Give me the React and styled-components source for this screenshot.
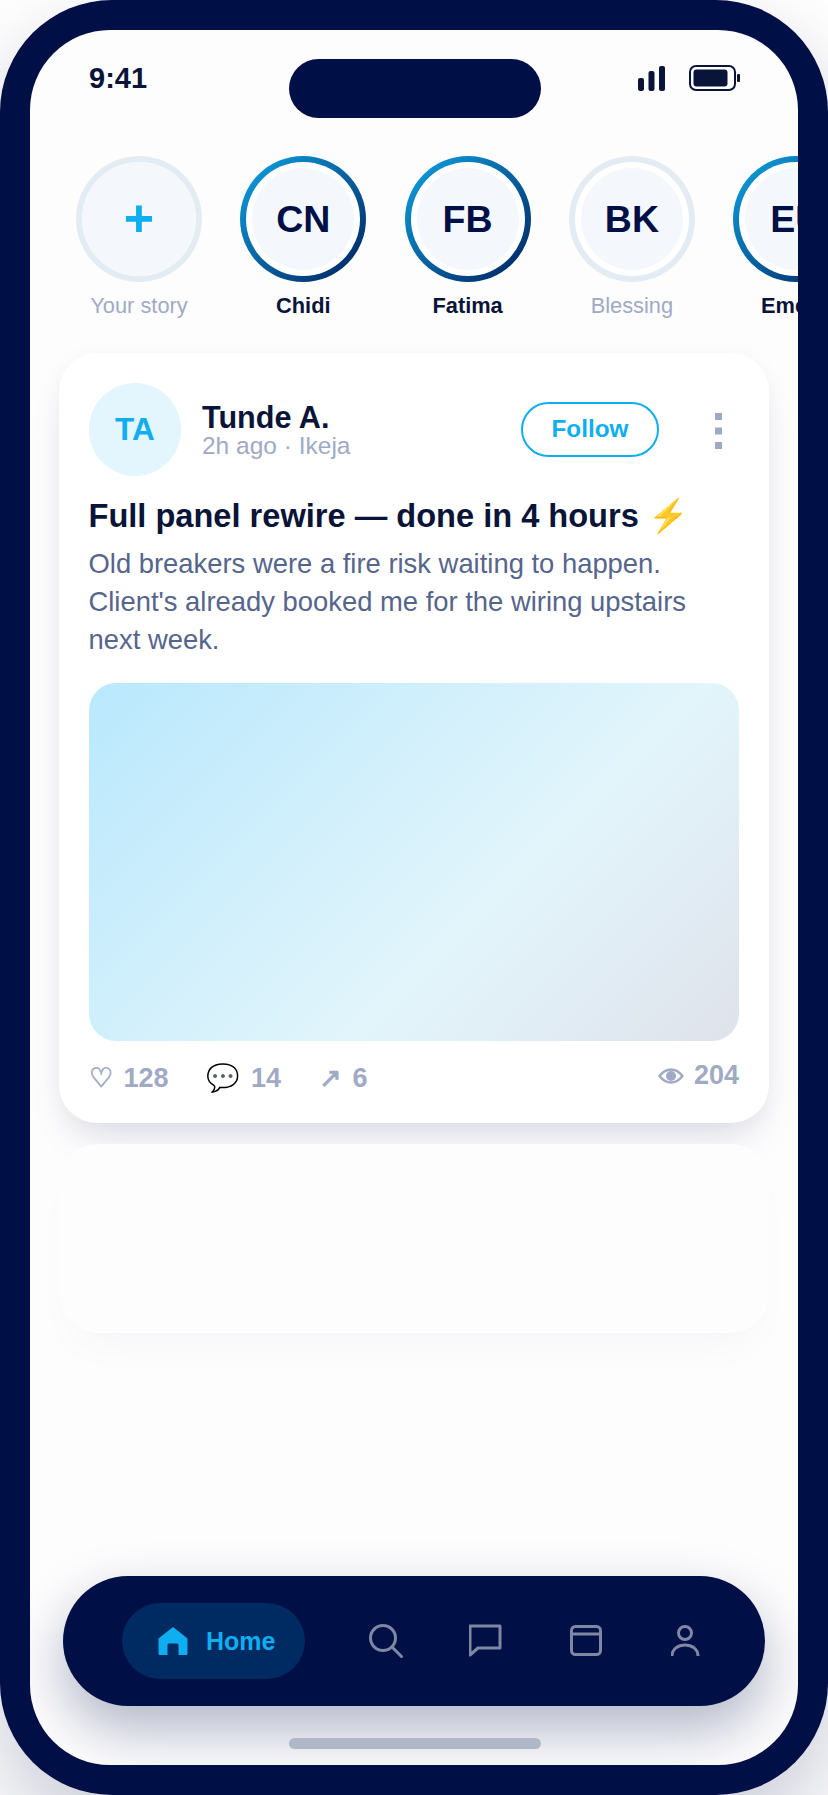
import React from "react";
import styled, { createGlobalStyle } from "styled-components";

const Global = createGlobalStyle`
  html, body { margin: 0; padding: 0; background: #fff; }
  * { box-sizing: border-box; }
  body { font-family: "Liberation Sans", Arial, sans-serif; }
`;
const Page = styled.div`width: 828px; height: 1795px; overflow: hidden; background: #fff;`;
const Phone = styled.div`
  position: relative; width: 828px; height: 1795px; padding: 30px; background: #000f45;
  border-radius: 112px; box-shadow: 0 40px 90px rgba(0, 15, 69, 0.22);
`;
const Screen = styled.div`
  position: relative; height: 1735px; border-radius: 80px; overflow: hidden; background: #fdfdfe;
`;
const Notch = styled.div`
  position: absolute; top: 29px; left: 259px; width: 252px; height: 59px;
  border-radius: 30px; background: #000f45;
`;
const StatusBar = styled.div`
  display: flex; justify-content: space-between; align-items: center;
  height: 66px; padding: 30px 58px 0 59px;
`;
const Time = styled.span`font-size: 29px; font-weight: 700; color: #0a1438;`;
const StatusIcons = styled.div`display: flex; align-items: center; gap: 24px;`;
const Stories = styled.div`display: flex; gap: 38.3px; margin-top: 60px; padding-left: 46px; overflow: hidden;`;
const Story = styled.div`flex: 0 0 126px; display: flex; flex-direction: column; align-items: center;`;
const Ring = styled.div`
  width: 126px; height: 126px; border-radius: 50%; padding: 6px;
  background: ${p => (p.$active ? "linear-gradient(135deg, #0ea5e4, #001f5c)" : "#e4ecf3")};
`;
const Gap = styled.div`
  width: 100%; height: 100%; border-radius: 50%; padding: ${p => (p.$flush ? 0 : 6)}px; background: #fff;
`;
const Face = styled.div`
  width: 100%; height: 100%; border-radius: 50%; background: #f4f8fd;
  display: flex; align-items: center; justify-content: center;
  font-size: ${p => (p.$plus ? 52 : 37.5)}px; font-weight: 700;
  padding-bottom: ${p => (p.$plus ? 3 : 0)}px; color: ${p => (p.$plus ? "#0eaef0" : "#000f45")};
`;
const StoryName = styled.div`
  margin-top: 10px; font-size: 21.8px; line-height: 28px; white-space: nowrap;
  font-weight: ${p => (p.$active ? 700 : 400)}; color: ${p => (p.$active ? "#0a1438" : "#a0aac4")};
`;
const Card = styled.div`
  margin: 33px 29px 0; padding: 30px 30px 25px 29.5px; background: #fff; border-radius: 38px;
  box-shadow: 0 4px 24px rgba(0, 15, 69, 0.035), 0 24px 44px -14px rgba(0, 15, 69, 0.14);
`;
const GhostCard = styled.div`
  position: relative; margin: 21px 29px 0; height: 189px; background: #fdfdfe; border-radius: 38px;
  box-shadow: 0 4px 24px rgba(0, 15, 69, 0.007), 0 24px 44px -14px rgba(0, 15, 69, 0.03);
`;
const Head = styled.div`display: flex; align-items: center; height: 93px;`;
const Avatar = styled.div`
  flex: 0 0 92.7px; height: 93px; border-radius: 50%; background: #e3f5fd; color: #0eaef0;
  display: flex; align-items: center; justify-content: center; font-size: 31.5px; font-weight: 700;
`;
const Who = styled.div`flex: 1; margin-left: 20.8px;`;
const Name = styled.div`font-size: 30.6px; line-height: 32px; font-weight: 700; color: #0a1438;`;
const Sub = styled.div`font-size: 24.5px; line-height: 26px; color: #a0aac4;`;
const Follow = styled.button`
  width: 138px; height: 55px; border: 2.5px solid #0eaef0; border-radius: 28px; background: #fff;
  color: #0eaef0; font: 700 24.3px "Liberation Sans", sans-serif; padding: 0; margin-top: -1px;
`;
const More = styled.svg`margin: 3px 17px 0 56px;`;
const Title = styled.div`
  margin-top: 20px; font-size: 32.6px; line-height: 40px; font-weight: 700; color: #0a1438; white-space: nowrap;
`;
const Body = styled.div`margin-top: 9px; font-size: 27.4px; line-height: 38px; color: #56658c;`;
const Media = styled.div`
  margin-top: 24px; height: 358px; border-radius: 27px;
  background: linear-gradient(135deg, #b9e8fd 0%, #e2f5fb 62%, #dfe2eb 100%);
`;
const Stats = styled.div`
  display: flex; align-items: center; height: 40px; margin-top: 17px;
  font-size: 27px; font-weight: 700; color: #a0aac4;
`;
const Stat = styled.span`
  display: inline-flex; align-items: center; gap: 11px; margin-right: 37.5px;
`;
const Views = styled(Stat)`margin: -5px 0 0 auto; gap: 10px;`;
const Nav = styled.div`
  position: absolute; left: 33px; top: 1546px; width: 702px; height: 130px; border-radius: 65px;
  background: #000f45; box-shadow: 0 24px 56px rgba(0, 15, 69, 0.3);
  display: flex; align-items: center; padding-left: 59px;
`;
const HomePill = styled.div`
  width: 183px; height: 76px; border-radius: 38px; background: #002b62; margin-right: 31px;
  display: flex; align-items: center; gap: 18px; padding-left: 36px;
  color: #0eaef0; font-size: 25px; font-weight: 700;
`;
const NavItem = styled.div`flex: 0 0 100px; display: flex; justify-content: center;`;
const HomeBar = styled.div`
  position: absolute; left: 259px; top: 1708px; width: 252px; height: 11px; border-radius: 6px; background: #b0b7c6;
`;

const Line = { fill: "none", stroke: "#7f87a2", strokeWidth: 3 };

export default function App() {
  const stories = [
    { i: "CN", n: "Chidi", a: true },
    { i: "FB", n: "Fatima", a: true },
    { i: "BK", n: "Blessing", a: false },
    { i: "EU", n: "Emeka", a: true },
  ];
  return (
    <Page>
      <Global />
      <Phone>
        <Screen>
          <StatusBar>
            <Time>9:41</Time>
            <StatusIcons>
              <svg width="27" height="25" viewBox="0 0 27 25" fill="#0a1438">
                <rect x="0" y="12" width="6" height="13" rx="2" />
                <rect x="10.500" y="5" width="6" height="20" rx="2" />
                <rect x="21" y="0" width="6" height="25" rx="2" />
              </svg>
              <svg width="51" height="26" viewBox="0 0 51 26">
                <rect x="1" y="1" width="45" height="24" rx="6" fill="none" stroke="#0a1438" strokeWidth="2" />
                <rect x="4.5" y="4.5" width="34" height="17" rx="3" fill="#0a1438" />
                <rect x="48" y="9" width="3" height="8" rx="1" fill="#0a1438" />
              </svg>
            </StatusIcons>
          </StatusBar>
          <Stories>
            <Story>
              <Ring><Gap $flush><Face $plus>+</Face></Gap></Ring>
              <StoryName>Your story</StoryName>
            </Story>
            {stories.map(s => (
              <Story key={s.i}>
                <Ring $active={s.a}><Gap><Face>{s.i}</Face></Gap></Ring>
                <StoryName $active={s.a}>{s.n}</StoryName>
              </Story>
            ))}
          </Stories>
          <Card>
            <Head>
              <Avatar>TA</Avatar>
              <Who>
                <Name>Tunde A.</Name>
                <Sub>2h ago · Ikeja</Sub>
              </Who>
              <Follow>Follow</Follow>
              <More width="7" height="36" viewBox="0 0 7 36" fill="#a0a9c4">
                <rect width="7" height="7" />
                <rect y="14.5" width="7" height="7" />
                <rect y="29" width="7" height="7" />
              </More>
            </Head>
            <Title>Full panel rewire — done in 4 hours ⚡</Title>
            <Body>Old breakers were a fire risk waiting to happen. Client's already booked me for the wiring upstairs next week.</Body>
            <Media />
            <Stats>
              <Stat><span>♡</span>128</Stat>
              <Stat><span>💬</span>14</Stat>
              <Stat><span>↗</span>6</Stat>
              <Views>
                <svg width="26" height="16" viewBox="0 0 26 16">
                  <path d="M1.500 8 C5 3.500 9 1.500 13 1.500 C17 1.500 21 3.500 24.500 8 C21 12.500 17 14.500 13 14.500 C9 14.500 5 12.500 1.500 8 Z" fill="none" stroke="#a0aac4" strokeWidth="2.400" />
                  <circle cx="13" cy="8" r="5" fill="#a0aac4" />
                </svg>
                204
              </Views>
            </Stats>
          </Card>
          <GhostCard />
          <Nav>
            <HomePill>
              <svg width="30" height="28" viewBox="0 0 30 28" fill="#0eaef0">
                <path d="M15 0 L29.500 11.500 V26.500 Q29.500 28 28 28 H20.500 V18 Q20.500 16.500 19 16.500 H11 Q9.500 16.500 9.500 18 V28 H2 Q.5 28 .5 26.500 V11.500 Z" />
              </svg>
              Home
            </HomePill>
            <NavItem>
              <svg width="36" height="36" viewBox="0 0 36 36" {...Line}>
                <circle cx="15" cy="15" r="12.500" />
                <path d="M24 24 L33.500 33.500" strokeLinecap="round" />
              </svg>
            </NavItem>
            <NavItem>
              <svg width="34" height="34" viewBox="0 0 34 34" {...Line} strokeLinejoin="round">
                <path d="M1 2 H31 V24 H9 L1 31 Z" />
              </svg>
            </NavItem>
            <NavItem>
              <svg width="32" height="32" viewBox="0 0 32 32" {...Line}>
                <rect x="1.500" y="1.500" width="29" height="28" rx="4" />
                <path d="M1.500 9 H30.500" />
              </svg>
            </NavItem>
            <NavItem>
              <svg width="30" height="32" viewBox="0 0 30 32" {...Line}>
                <circle cx="14" cy="8" r="6.500" />
                <path d="M1 31 C1 24 7 20 14 20 C21 20 27 24 27 31" />
              </svg>
            </NavItem>
          </Nav>
          <HomeBar />
          <Notch />
        </Screen>
      </Phone>
    </Page>
  );
}
